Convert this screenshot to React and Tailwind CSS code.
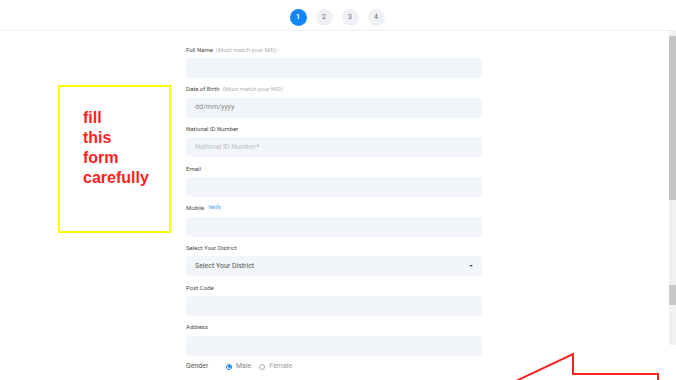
import React from 'react';

const fields = [
  { label: 'Full Name', hint: '(Must match your NID)' },
  { label: 'Date of Birth', hint: '(Must match your NID)', placeholder: 'dd/mm/yyyy', dark: true },
  { label: 'National ID Number', placeholder: 'National ID Number*' },
  { label: 'Email' },
  { label: 'Mobile', verify: true },
  { label: 'Select Your District', select: 'Select Your District' },
  { label: 'Post Code' },
  { label: 'Address' },
];

const Field = ({ field }) => (
  <div className="mb-[5.7px]">
    <div className="h-[10px] mb-[4px] flex items-center gap-[3px] text-[6px] text-[#4a4a4a]">
      <span>{field.label}</span>
      {field.hint && <span className="text-[#b0b0b0]">{field.hint}</span>}
      {field.verify && <span className="text-[5px] text-[#3b8cf0] ml-[1px]">Verify</span>}
    </div>
    <div className="h-[20px] rounded-[3px] bg-[#f2f5fa] flex items-center justify-between px-[9px]">
      {field.placeholder && (
        <span className={`text-[7px] ${field.dark ? 'text-[#8a8a8a]' : 'text-[#c0c0c0]'}`}>{field.placeholder}</span>
      )}
      {field.select && (
        <>
          <span className="text-[7px] text-[#555]">{field.select}</span>
          <span className="w-0 h-0 border-l-[2.5px] border-r-[2.5px] border-t-[2.5px] border-l-transparent border-r-transparent border-t-[#555]" />
        </>
      )}
    </div>
  </div>
);

const App = () => {
  return (
    <div
      className="relative w-[676px] h-[380px] overflow-hidden bg-white"
      style={{ fontFamily: 'Roboto, "Liberation Sans", sans-serif' }}
    >
      {/* Steps */}
      <div className="h-[31px] border-b border-[#f0f0f0] flex justify-center items-start pt-[9px] gap-[9px] pr-[2px]">
        {[1, 2, 3, 4].map((n) => (
          <div
            key={n}
            className={`w-[17px] h-[17px] rounded-full flex items-center justify-center text-[7px] ${
              n === 1 ? 'bg-[#1487f4] text-white font-bold' : 'bg-[#eff1f4] text-[#666]'
            }`}
          >
            {n}
          </div>
        ))}
      </div>

      <div className="flex">
        <div className="flex-1">
          <div className="ml-[186px] w-[296px] pt-[13px]">
            {fields.map((f) => (
              <Field key={f.label} field={f} />
            ))}
            <div className="flex items-center h-[10px] mt-[2px] text-[7px] text-[#555]">
              <span className="w-[40px]">Gender</span>
              <span className="w-[6px] h-[6px] rounded-full border border-[#1487f4] flex items-center justify-center mr-[4px]">
                <span className="w-[3px] h-[3px] rounded-full bg-[#1487f4]" />
              </span>
              <span className="text-[#888] mr-[8px]">Male</span>
              <span className="w-[6px] h-[6px] rounded-full border border-[#aaa] mr-[4px]" />
              <span className="text-[#999]">Female</span>
            </div>
          </div>
        </div>

        {/* Scrollbar */}
        <div className="w-[7px] h-[314px] bg-[#f1f1f1] flex flex-col">
          <div className="h-[5px]" />
          <div className="h-[164px] bg-[#c4c4c4]" />
          <div className="h-[85px]" />
          <div className="h-[20px] bg-[#c8c8c8]" />
        </div>
      </div>

      {/* Annotation box */}
      <div className="absolute left-[58px] top-[85px] w-[113px] h-[148px] border-2 border-[#ffff00] pl-[23px] pt-[21px]">
        <div
          className="text-[16px] leading-[20px] font-bold text-[#ff1f1f]"
          style={{ fontFamily: '"Liberation Sans", Arial, sans-serif' }}
        >
          <div>fill</div>
          <div>this</div>
          <div>form</div>
          <div>carefully</div>
        </div>
      </div>

      {/* Annotation arrow */}
      <svg className="absolute left-0 top-0" width="676" height="380" viewBox="0 0 676 380">
        <polyline
          points="516,381 573,354 573,374 658,374 658,381"
          fill="none"
          stroke="#ff2020"
          strokeWidth="2"
        />
      </svg>
    </div>
  );
};

export default App;
